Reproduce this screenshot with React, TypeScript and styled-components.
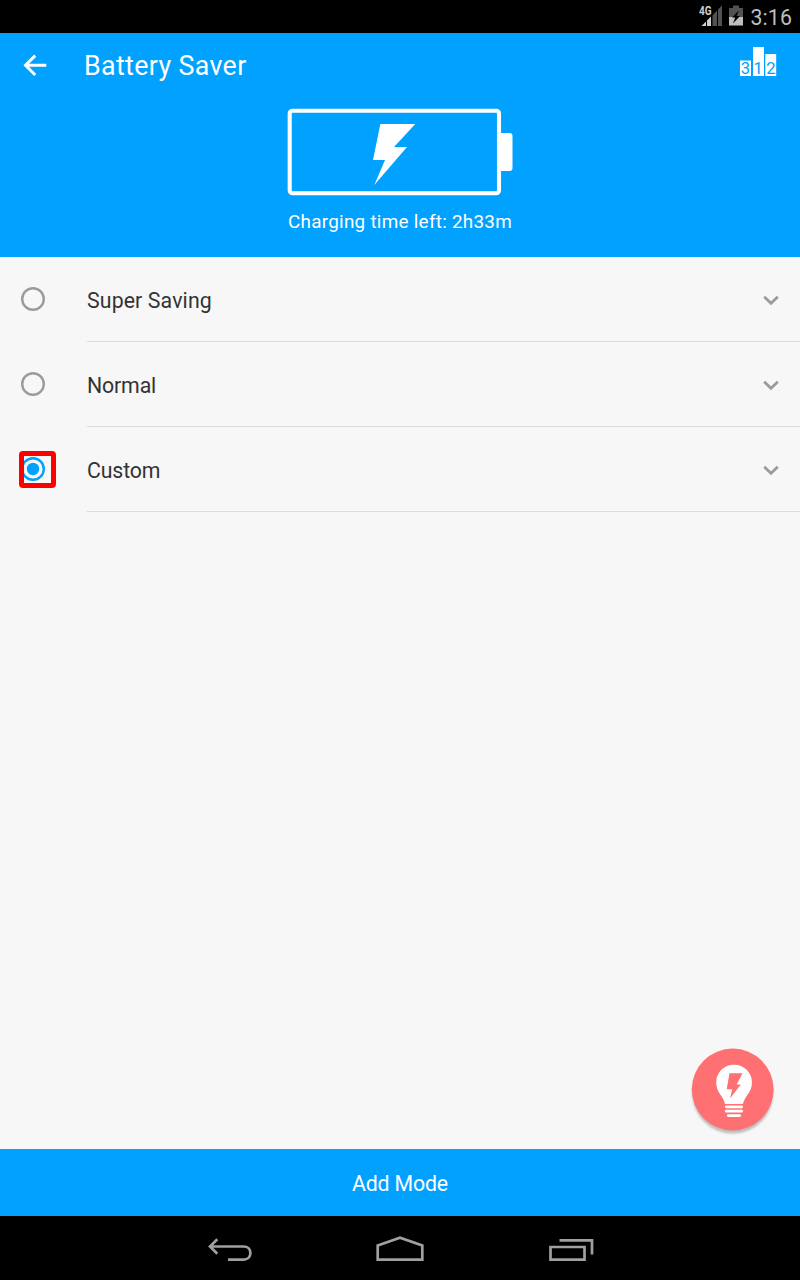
import React, { useState } from "react";
import styled, { createGlobalStyle } from "styled-components";

const BLUE = "#00a1ff";

const GlobalStyle = createGlobalStyle`
  * { box-sizing: border-box; }
  body { margin: 0; background: #f7f7f7; font-family: Roboto, "Noto Sans", sans-serif; }
  svg { display: block; flex: none; }
`;

const Screen = styled.div`
  position: relative;
  display: flex;
  flex-direction: column;
  width: 800px;
  height: 1280px;
  overflow: hidden;
  background: #f7f7f7;
`;

const StatusBar = styled.div`
  display: flex;
  justify-content: flex-end;
  height: 33px;
  padding-right: 8px;
  background: #000;
`;

const Clock = styled.span`
  margin-left: 7px;
  font-size: 21.3px;
  line-height: 35px;
  letter-spacing: 0.1px;
  color: #bebebe;
`;

const Header = styled.header`
  display: flex;
  flex-direction: column;
  align-items: center;
  height: 224px;
  background: ${BLUE};
  color: #fff;
`;

const TitleBar = styled.div`
  display: flex;
  align-items: center;
  width: 100%;
  height: 66px;
  padding: 0 23px;
`;

const Title = styled.h1`
  flex: 1;
  margin: 0 0 0 36px;
  font-size: 26.8px;
  font-weight: 400;
  line-height: 66px;
  letter-spacing: 0.35px;
`;

const BatteryArt = styled.svg`
  margin-top: 7px;
`;

const ChargeText = styled.p`
  margin: 13px 0 0;
  font-size: 18.9px;
  line-height: 26px;
  letter-spacing: 0.26px;
`;

const ModeList = styled.main`
  flex: 1;
  display: flex;
  flex-direction: column;
`;

const ModeRow = styled.div`
  display: flex;
  height: 85px;
  padding-left: 16px;
  cursor: pointer;
`;

const RadioCell = styled.div`
  display: flex;
  align-items: center;
  width: 71px;
  height: 84px;
  padding-left: 3px;
`;

const RadioFrame = styled.div<{ $marked: boolean }>`
  width: 37px;
  height: 37px;
  margin-top: 1px;
  border: 5px solid ${(p) => (p.$marked ? "#ff0000" : "transparent")};
  border-radius: 4px;
  overflow: ${(p) => (p.$marked ? "hidden" : "visible")};

  svg { overflow: visible; }
`;

const ModeBody = styled.div`
  flex: 1;
  display: flex;
  align-items: center;
  justify-content: space-between;
  padding-right: 20px;
  border-bottom: 1px solid #dcdcdc;
`;

const ModeName = styled.span<{ $tracking: number }>`
  padding-top: 3px;
  font-size: 21.3px;
  line-height: 28px;
  letter-spacing: ${(p) => p.$tracking}px;
  color: #333;
`;

const ChevronIcon = styled.svg`
  margin-top: 2px;
`;

const AddButton = styled.button`
  height: 67px;
  padding: 2px 0 0;
  border: 0;
  background: ${BLUE};
  color: #fff;
  font: 400 21.3px Roboto, sans-serif;
  letter-spacing: -0.15px;
`;

const NavBar = styled.nav`
  display: flex;
  justify-content: center;
  height: 64px;
  background: #000;
`;

const FloatingTip = styled.button`
  position: absolute;
  right: 20px;
  bottom: 138px;
  padding: 0;
  border: 0;
  background: none;
`;

function SystemIcons() {
  return (
    <svg width="48" height="33" viewBox="696 0 48 33">
      <text x="699" y="15.3" fill="#cfcfcf" fontSize="12.5" fontWeight="700" textLength="12.6" lengthAdjust="spacingAndGlyphs">4G</text>
      <path d="M701.5 26L706 21.5V26ZM707 20.5L711 16.5V26H707Z" fill="#d0d0d0" />
      <path d="M712.5 15.5L717 10.5V26H712.5ZM718 9.5L722 5.5V26H718Z" fill="#505450" />
      <path d="M733 5.5H739V8H743V17H729V8H733Z" fill="#50534f" />
      <path d="M729 17H743V25.5H729Z" fill="#bebebe" />
      <path d="M738.8 10.5L732 17.5H735.2L733 23.5L740 16H736.7Z" fill="#000" />
    </svg>
  );
}

function BackArrow() {
  return (
    <svg width="25" height="24" viewBox="23 54 25 24" fill="none" stroke="#fff" strokeWidth="3">
      <path d="M46.3 65.3H26M35.2 55.6L25.5 65.3L35.2 75" />
    </svg>
  );
}

function Podium() {
  return (
    <svg width="37" height="30" viewBox="740 51 37 30" overflow="visible">
      <path d="M740 60.5H751V76H740ZM753 47H764V76H753ZM765.3 54H776.2V76H765.3Z" fill="#fff" />
      <g fill={BLUE} fontSize="16.5" textAnchor="middle">
        <text x="745.5" y="74.3">3</text>
        <text x="758.2" y="74.3">1</text>
        <text x="770.8" y="74.3">2</text>
      </g>
    </svg>
  );
}

function Battery() {
  return (
    <BatteryArt width="226" height="90" viewBox="287 106 226 90">
      <rect x="289.7" y="110.7" width="209.3" height="82.6" rx="2.8" fill="none" stroke="#fff" strokeWidth="4.1" />
      <path d="M500.5 133H509.5Q512.5 133 512.5 136V168Q512.5 171 509.5 171H500.5Z" fill="#fff" />
      <path d="M380.3 124H415.3L394 147H407L374.3 185L385 160H373Z" fill="#fff" />
    </BatteryArt>
  );
}

function Radio({ on }: { on: boolean }) {
  return (
    <svg width="27" height="27" viewBox="0 0 27 27">
      <circle cx="9" cy="13" r="10.8" fill="none" stroke={on ? BLUE : "#9b9b9b"} strokeWidth="2.4" />
      {on && <circle cx="9" cy="13" r="6.2" fill={BLUE} />}
    </svg>
  );
}

function Chevron() {
  return (
    <ChevronIcon width="18" height="14" viewBox="0 0 18 14">
      <path d="M2.2 3.8L9 10.3L15.8 3.8" fill="none" stroke="#9b9b9b" strokeWidth="2.8" />
    </ChevronIcon>
  );
}

function BulbButton() {
  return (
    <FloatingTip aria-label="Tips">
      <svg width="92" height="100" viewBox="688 1042 92 100">
        <defs>
          <filter id="soft" x="-10%" y="-10%" width="120%" height="120%">
            <feGaussianBlur stdDeviation="0.8" />
          </filter>
        </defs>
        <circle cx="732.7" cy="1093" r="40.5" fill="#bdbdbd" filter="url(#soft)" />
        <circle cx="732.7" cy="1089.5" r="40.9" fill="#ff7073" />
        <path d="M734 1064.8C744 1064.8 752 1072.5 752 1082.5C752 1087.5 750 1091.5 747 1095.5C744.5 1099 743.5 1101.5 743 1104H725C724.5 1101.5 723.5 1099 721 1095.5C718 1091.5 716.2 1087.5 716.2 1082.5C716.2 1072.5 724 1064.8 734 1064.8Z" fill="#fff" />
        <path d="M729.5 1073.3H742.5L736.7 1084.4H740.8L730 1098.5L732.3 1089.2H726.7Z" fill="#ff7073" />
        <path d="M726.3 1106.8H741.7M726.3 1111.2H741.7M728.3 1115.6H739.7" stroke="#fff" strokeWidth="2.7" strokeLinecap="round" />
      </svg>
    </FloatingTip>
  );
}

function NavIcons() {
  return (
    <svg width="400" height="64" viewBox="200 1216 400 64" fill="none" stroke="#a0a0a0" strokeWidth="2.7">
      <path d="M217.3 1239.3L210 1246.5L217.3 1253.8M210 1246.5H243.5C252.7 1246.5 252.7 1259.6 243.5 1259.6H228" />
      <path d="M377.7 1245.5L400 1237.8L422.3 1245.5V1259.7H377.7Z" />
      <path d="M550.5 1247H584.5V1259.7H550.5ZM559.5 1240.3H592V1254.5" />
    </svg>
  );
}

const MODES = [
  { name: "Super Saving", tracking: 0.12 },
  { name: "Normal", tracking: -0.15 },
  { name: "Custom", tracking: -0.15 },
];

export default function App() {
  const [selected, setSelected] = useState("Custom");
  return (
    <>
      <GlobalStyle />
      <Screen>
        <StatusBar>
          <SystemIcons />
          <Clock>3:16</Clock>
        </StatusBar>
        <Header>
          <TitleBar>
            <BackArrow />
            <Title>Battery Saver</Title>
            <Podium />
          </TitleBar>
          <Battery />
          <ChargeText>Charging time left: 2h33m</ChargeText>
        </Header>
        <ModeList>
          {MODES.map(({ name, tracking }) => (
            <ModeRow key={name} onClick={() => setSelected(name)}>
              <RadioCell>
                <RadioFrame $marked={name === selected}>
                  <Radio on={name === selected} />
                </RadioFrame>
              </RadioCell>
              <ModeBody>
                <ModeName $tracking={tracking}>{name}</ModeName>
                <Chevron />
              </ModeBody>
            </ModeRow>
          ))}
        </ModeList>
        <AddButton>Add Mode</AddButton>
        <NavBar>
          <NavIcons />
        </NavBar>
        <BulbButton />
      </Screen>
    </>
  );
}
